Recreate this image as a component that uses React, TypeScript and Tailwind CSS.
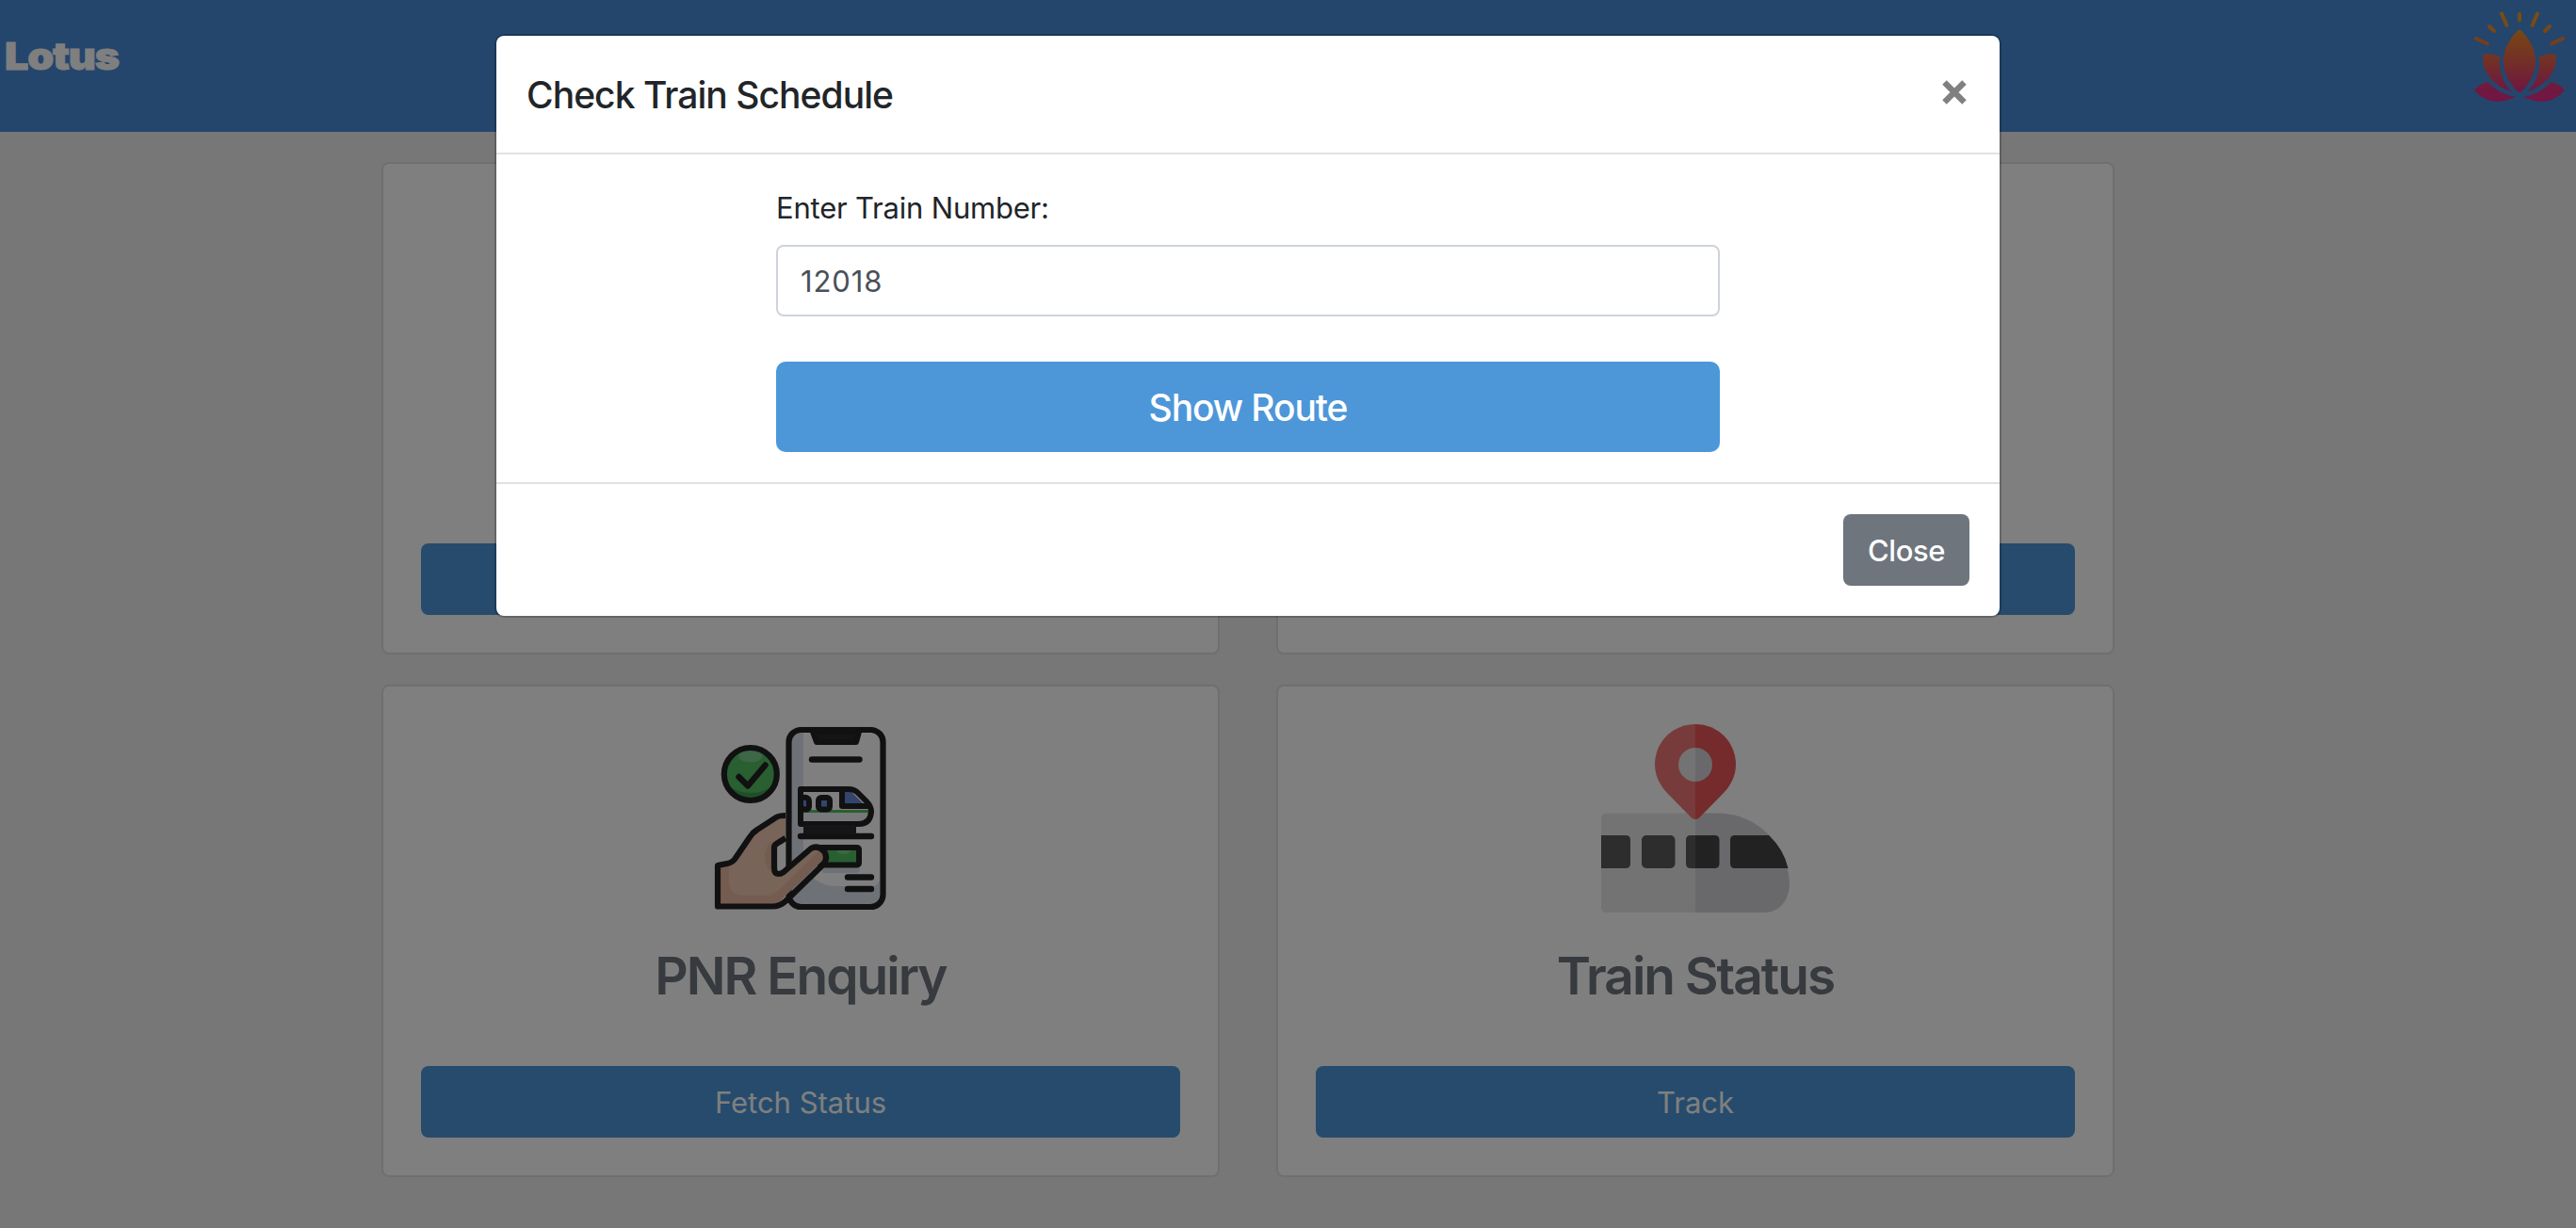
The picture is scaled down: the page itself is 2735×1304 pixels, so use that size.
import React from "react";

function LotusLogo() {
  return (
    <svg className="h-[100px] w-[100px]" viewBox="0 0 100 100">
      <defs>
        <linearGradient id="lotus" gradientUnits="userSpaceOnUse" x1="0" y1="0" x2="0" y2="100">
          <stop offset="0" stopColor="#f5a020" />
          <stop offset="0.2" stopColor="#f09028" />
          <stop offset="0.55" stopColor="#e6604e" />
          <stop offset="0.85" stopColor="#e03080" />
          <stop offset="1" stopColor="#e02c90" />
        </linearGradient>
      </defs>
      <g fill="url(#lotus)">
        <path d="M50 21C44 25.500 33 39 33 54.500C33 70 43 84 50 88.500C57 84 67 70 67 54.500C67 39 56 25.500 50 21Z" />
        <path d="M11.500 47.500Q21 46.500 29 50C28 66 32 78 42 87.500C27 83 8.500 69 11.500 47.500Z" />
        <path d="M88.500 47.500Q79 46.500 71 50C72 66 68 78 58 87.500C73 83 91.500 69 88.500 47.500Z" />
        <path d="M2 86Q8 78.500 16.500 77Q29 91 46 92.500Q20 106 2 86Z" />
        <path d="M98 86Q92 78.500 83.500 77Q71 91 54 92.500Q80 106 98 86Z" />
      </g>
      <g stroke="url(#lotus)" strokeWidth="4" strokeLinecap="round">
        <path d="M49.990 5L50.010 11.300M31 4.500L36.500 17M69 4.500L63.500 17M18 18L23 23M82 18L77 23M4 31L16 36.500M96 31L84 36.500" />
      </g>
    </svg>
  );
}

function PhoneTicketIcon() {
  return (
    <svg className="h-[200px] w-[200px]" viewBox="750 769 200 200">
      {/* phone */}
      <rect x="837.500" y="775" width="100" height="188" rx="13" fill="#fff" />
      <path d="M853 778H850Q840 778 840 788V950Q840 960 850 960H924Q934 960 934 950V932Q934 941 924 941H885Q853 938 853 900Z" fill="#dce4ee" />
      <rect x="872" y="918" width="41" height="9" rx="4" fill="#dce4ee" />
      <path d="M863 777H912L909 788H867Z" fill="#2a2b31" stroke="#222" strokeWidth="6" strokeLinejoin="round" />
      <rect x="837.500" y="775" width="100" height="188" rx="13" fill="none" stroke="#222" strokeWidth="6.200" />
      <path d="M862 806.500H912.500M850 888H925M900 931.500H925M900 944H925" stroke="#222" strokeWidth="6.400" strokeLinecap="round" />
      {/* train */}
      <path d="M850 838H901Q907 838 911 842L920 851Q925 856 925 862Q924 875 912 875H850Z" fill="#fff" />
      <path d="M850 861H924Q923 875 912 875H850Z" fill="#eef1f5" />
      <path d="M850 860H924V863H850Z" fill="#52bf63" />
      <path d="M897 840H903L917 854H897Z" fill="#678bd8" />
      <rect x="852" y="849" width="6" height="9" fill="#678bd8" />
      <rect x="871" y="849" width="8" height="9" fill="#678bd8" />
      <g fill="none" stroke="#222" strokeWidth="6" strokeLinejoin="round" strokeLinecap="round">
        <path d="M850 838H901Q907 838 911 842L920 851Q925 856 925 862Q924 875 912 875H850Z" />
        <path d="M894 840V856H922" />
        <path d="M852 847Q859 846 859 851V856Q859 861 852 859" />
        <rect x="869" y="847" width="12" height="12.500" rx="3" />
      </g>
      <path d="M853 876H909V886H853Z" fill="#2a2b31" />
      {/* action button */}
      <rect x="870" y="900" width="42" height="18.500" rx="2" fill="#52bf63" stroke="#222" strokeWidth="6" />
      <path d="M888 903H903Q902 907 896 907Q889 907 888 903Z" fill="#7bcf8d" />
      {/* hand */}
      <path d="M762 919L772 917Q778 916 781 911L796 889Q799 884 804 881L824 868Q827 866 834 866V892L826 896Q822 898 822 902V922Q822 928 827 928Q829 928 832 925L861 901Q868 897 873 902Q878 908 873 914L836 947L831 954Q826 961 820 961H762Z" fill="#f0c8b0" />
      <path d="M762 919L774 916V938Q776 951 789 951H816Q820 951 826 946L870 903Q878 906 873 914L831 954Q826 961 820 961H762ZM820 893Q812 899 812 910Q812 921 820 926Z" fill="#e8b8a2" />
      <path d="M834 866Q827 866 824 868L804 881Q799 884 796 889L781 911Q778 916 772 917L762 919V962.500H820Q828 962.500 834 957L873 919Q880 912 875 904Q868 897 861 901L832 926Q829 928 827 928Q822 928 822 922V900Q822 897 826 895L834 890" fill="none" stroke="#222" strokeWidth="6.200" strokeLinejoin="round" />
      {/* confirmed badge */}
      <circle cx="796.800" cy="822" r="28" fill="#52bf63" />
      <path d="M771 832Q782 842 797 842Q812 842 823 832Q816 848 797 849Q778 848 771 832Z" fill="#3f9f50" />
      <ellipse cx="796.800" cy="803" rx="12.500" ry="6.500" fill="#7bcf8d" />
      <circle cx="796.800" cy="822" r="28" fill="none" stroke="#222" strokeWidth="6.200" />
      <path d="M784.500 825L794 834.500L812.500 812.500" fill="none" stroke="#222" strokeWidth="6.400" strokeLinecap="round" strokeLinejoin="round" />
    </svg>
  );
}

function TrainPinIcon() {
  return (
    <svg className="h-[200px] w-[200px]" viewBox="0 0 200 200">
      <path d="M6 94.500H100V200H6Q0 200 0 194V100.500Q0 94.500 6 94.500Z" fill="#e6e6e6" />
      <path d="M100 94.500H125C165 95 200 128 200 172Q197 198 174 200H100Z" fill="#d2d2d6" />
      <path d="M0 118H26Q31 118 31 123V148Q31 153 26 153H0Z" fill="#5a5a5a" />
      <rect x="43" y="118" width="35.500" height="35" rx="5" fill="#5a5a5a" />
      <path d="M100 118H95Q90 118 90 123V148Q90 153 95 153H100Z" fill="#5a5a5a" />
      <path d="M100 118H120.500Q125.500 118 125.500 123V148Q125.500 153 120.500 153H100ZM142 118H178Q194 133 198.500 153H142Q137 153 137 148V123Q137 118 142 118Z" fill="#444" />
      <path d="M100 0C76 0 57 19 57 43C57 54 62 64 69 72L96 99.500Q98 101 100 101Z" fill="#f07676" />
      <path d="M100 0C124 0 143 19 143 43C143 54 138 64 131 72L104 99.500Q102 101 100 101Z" fill="#eb5757" />
      <path d="M100 25A18 18 0 0 0 100 61Z" fill="#e6e6e6" />
      <path d="M100 25A18 18 0 0 1 100 61Z" fill="#d2d2d6" />
    </svg>
  );
}

type CardProps = { icon?: React.ReactNode; title?: string; action?: string };

function Card({ icon, title, action }: CardProps) {
  return (
    <section className="flex h-[523px] flex-col items-center rounded-[8px] border-2 border-[#dfdfdf] bg-white p-[40px]">
      <div className="h-[200px]">{icon}</div>
      <h2 className="mt-[33px] h-[68px] text-[55px] leading-[68px] font-[560] tracking-[-2px] text-[#6f757d]">{title}</h2>
      <button className="mt-auto h-[76px] w-full rounded-[8px] bg-[#4c96da] pt-[2px] text-[31px] text-white">{action}</button>
    </section>
  );
}

export default function App() {
  return (
    <div className="relative h-[1304px] w-[2735px] overflow-hidden bg-[#eeeeee] font-['Inter',sans-serif] text-[#212529]">
      <header className="flex h-[140px] justify-between bg-[#488cd8] pt-[10px] pr-[10px] pl-[5px]">
        <span className="mt-[24px] h-[52px] origin-left scale-x-[1.12] text-[40px] leading-[52px] font-black tracking-[-1px] text-white [-webkit-text-stroke:1px_white]">Lotus</span>
        <LotusLogo />
      </header>
      <main className="mt-[32px] ml-[405px] grid w-[1840px] grid-cols-2 gap-x-[60px] gap-y-[32px]">
        <Card />
        <Card />
        <Card icon={<PhoneTicketIcon />} title="PNR Enquiry" action="Fetch Status" />
        <Card icon={<TrainPinIcon />} title="Train Status" action="Track" />
      </main>
      <div className="absolute inset-0 bg-black/50">
        <div className="mt-[36px] ml-[525px] w-[1600px] rounded-[10px] border-2 border-black/20 bg-white bg-clip-padding" role="dialog">
          <div className="flex h-[126px] justify-between border-b-2 border-[#dee2e6] px-[32px] pt-[32px]">
            <h5 className="pt-px text-[39px] leading-[60px] font-[550] tracking-[-0.95px]">Check Train Schedule</h5>
            <button className="flex h-[56px] w-[32px] items-center justify-center" aria-label="Close dialog">
              <svg className="h-[26px] w-[26px]" viewBox="0 0 26 26" stroke="#808080" strokeWidth="6.400">
                <path d="M2.500 2.500L23.500 23.500M23.500 2.500L2.500 23.500" />
              </svg>
            </button>
          </div>
          <div className="flex h-[348px] flex-col px-[297px] pt-[33px]">
            <label className="text-[31px] leading-[48px] tracking-[-0.2px]">Enter Train Number:</label>
            <input className="mt-[15px] h-[76px] rounded-[8px] border-2 border-[#ced4da] px-[24px] text-[31px] tracking-[0.9px] text-[#495057]" defaultValue="12018" />
            <button className="mt-[48px] h-[96px] rounded-[10px] bg-[#4d97d9] pt-[2px] text-[39px] font-[450] tracking-[-1.1px] text-white">Show Route</button>
          </div>
          <div className="flex h-[142px] justify-end border-t-2 border-[#dee2e6] px-[32px] pt-[32px]">
            <button className="h-[76px] w-[134px] rounded-[8px] bg-[#6e757d] pt-[2px] text-[31px] font-[450] tracking-[-0.4px] text-white">Close</button>
          </div>
        </div>
      </div>
    </div>
  );
}
